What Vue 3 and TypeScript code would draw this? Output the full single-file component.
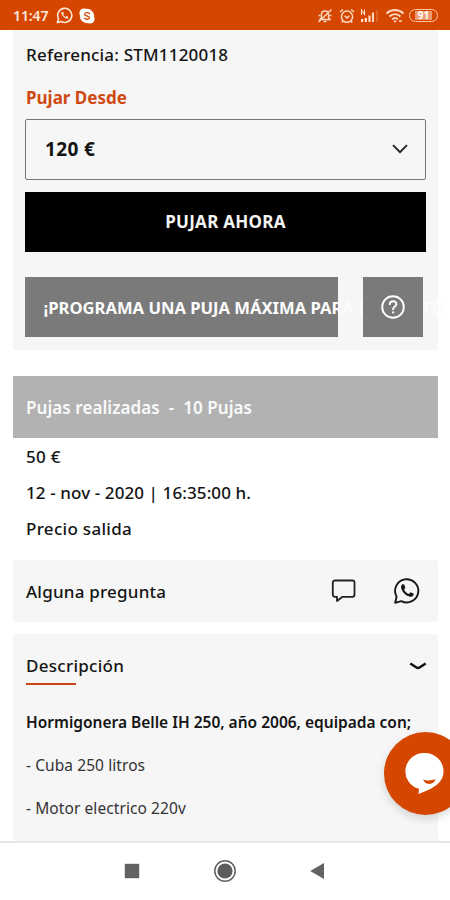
<script setup lang="ts">
interface Bid {
  amount: string
  date: string
  note: string
}

const reference = 'STM1120018'
const selectedBid = '120 €'
const bidCount = 10
const bid: Bid = { amount: '50 €', date: '12 - nov - 2020 | 16:35:00 h.', note: 'Precio salida' }
const features: string[] = ['- Cuba 250 litros', '- Motor electrico 220v']
</script>

<template>
  <div class="screen">
    <header class="status">
      <span class="clock">11:47</span>
      <svg class="s-wa" width="17" height="17" viewBox="0 0 24 24" fill="none" stroke="#ffe9dc" stroke-width="2.2">
        <path d="M2 22l1.6-5.4A10 10 0 1 1 7.4 20.500z" stroke-linejoin="round" />
        <path d="M8 7c-2 3 4.500 10 8.500 9.500l1-2.500-2.600-1.200-1.300 1.200c-1.500-.6-2.700-1.800-3.400-3.200l1-1.200L10 7z" fill="#ffe9dc" stroke="none" />
      </svg>
      <svg class="s-sk" width="16" height="16" viewBox="0 0 16 16">
        <circle cx="8" cy="8" r="7.200" fill="#fff" /><circle cx="5" cy="5" r="4.600" fill="#fff" /><circle cx="11" cy="11" r="4.600" fill="#fff" />
        <path d="M10.500 5.700C9.500 4.200 5.600 4.300 5.600 6.300c0 2.200 4.900 1.200 4.900 3.300 0 2.100-4.100 2.100-5.100.6" fill="none" stroke="#d64a08" stroke-width="1.300" stroke-linecap="round" />
      </svg>
      <div class="status-right">
        <svg width="16" height="16" viewBox="0 0 16 16" fill="none" stroke="#ffd9c2" stroke-width="1.400">
          <path d="M3 11.500l1.500-2V6.500C4.500 4.500 6 3 8 3s3.500 1.500 3.500 3.500v3l1.500 2zM6.500 13.500h3M1.500 14L14.500 1.500M1.500 7.500h2M12.500 7.500h2" />
        </svg>
        <svg width="16" height="16" viewBox="0 0 16 16" fill="none" stroke="#ffd9c2" stroke-width="1.500">
          <circle cx="8" cy="8.700" r="5.600" /><path d="M5.600 7.700L8 10l2.400-2.300M1 4l3-2.500M15 4l-3-2.500M4 13l-1.200 1.500M12 13l1.200 1.500" />
        </svg>
        <svg class="s-signal" width="18" height="16" viewBox="0 0 18 16" fill="#ffd9c2">
          <path d="M1 14h2.300v-3H1zM4.700 14H7v-4H4.700zM8.400 14h2.200V7.500H8.400zM12 14h2V4.500h-2z" />
          <path d="M16.500 2h1v12h-1z" opacity=".4" />
          <path d="M1.500 7V2l3 4.500V1.500" fill="none" stroke="#ffd9c2" stroke-width="1.100" />
        </svg>
        <svg class="s-wifi" width="20" height="16" viewBox="0 0 20 16" fill="none" stroke="#ffd9c2" stroke-width="2">
          <path d="M1.500 5.500c5-4.600 12-4.600 17 0M4.500 8.500c3.300-3 7.700-3 11 0M7.200 11.300c1.700-1.500 3.900-1.500 5.600 0" />
          <path d="M8.300 12.500L10 15l1.700-2.500z" fill="#ffd9c2" stroke="none" /><path d="M14 13h3" stroke-width="1.500" />
        </svg>
        <span class="battery"><span class="level">91</span></span>
      </div>
    </header>

    <main class="content">
      <section class="bid-panel">
        <p class="ref">Referencia: {{ reference }}</p>
        <p class="from">Pujar Desde</p>
        <div class="select">
          <span class="select-value">{{ selectedBid }}</span>
          <svg width="16" height="10" viewBox="0 0 16 10" fill="none" stroke="#222" stroke-width="1.900"><path d="M1 1.200l7 7 7-7" /></svg>
        </div>
        <button class="btn now"><span>PUJAR AHORA</span></button>
        <div class="program-row">
          <button class="btn program"><span>¡PROGRAMA UNA PUJA MÁXIMA PARA ESTE LOTE!</span></button>
          <button class="btn help">
            <svg width="24" height="24" viewBox="0 0 24 24" fill="none" stroke="#fff" stroke-width="1.900" stroke-linecap="round">
              <circle cx="12" cy="12" r="10.800" /><path d="M8.700 9.300c.3-4.200 6.800-3.900 6.700-.1 0 2.300-3.300 2.400-3.300 5" /><path d="M12.100 17.300v.2" stroke-width="2.200" />
            </svg>
          </button>
        </div>
      </section>

      <section class="bids">
        <h2 class="bids-head"><span>Pujas realizadas</span><span class="dash">-</span><span>{{ bidCount }} Pujas</span></h2>
        <div class="bid">
          <p class="amount">{{ bid.amount }}</p>
          <p class="date">{{ bid.date }}</p>
          <p class="note">{{ bid.note }}</p>
        </div>
      </section>

      <section class="question">
        <span class="question-label">Alguna pregunta</span>
        <svg class="chat" width="26" height="26" viewBox="0 0 26 26" fill="none" stroke="#222" stroke-width="1.800" stroke-linejoin="round">
          <path d="M3.500 2.500h18a2 2 0 0 1 2 2v12.300a2 2 0 0 1-2 2H11.500L6 23v-4.200H3.800a2 2 0 0 1-2-2V4.500a2 2 0 0 1 1.700-2z" />
        </svg>
        <svg class="wa" width="28" height="28" viewBox="0 0 28 28" fill="none" stroke="#181818" stroke-width="1.900" stroke-linejoin="round">
          <path d="M2.200 25.800l1.400-6.300a11.600 11.600 0 1 1 4.700 4.600z" />
          <path d="M9.700 7.300c-1.300.6-2 2-1.500 3.900 1.100 4.200 4.700 7.600 8.900 8.500 2 .4 3.500-.7 3.700-2.900l-3.200-1.500-1.700 1.700c-2.300-.9-3.900-2.500-4.800-4.600l1.300-1.600-1.300-3.500z" fill="#181818" stroke="none" />
        </svg>
      </section>

      <section class="description">
        <div class="desc-head">
          <h2 class="desc-title">Descripción</h2>
          <svg width="18" height="9" viewBox="0 0 18 9" fill="none" stroke="#111" stroke-width="2.600"><path d="M1.300 1.500L7.500 5.500q1.500 1 3 0L16.700 1.500" /></svg>
        </div>
        <p class="lead">Hormigonera Belle IH 250, año 2006, equipada con;</p>
        <p v-for="feature in features" :key="feature" class="feature">{{ feature }}</p>
      </section>
    </main>

    <button class="fab">
      <svg width="41" height="45" viewBox="0 0 42 46">
        <path d="M21 2a19 18.700 0 0 1 19.500 18.700C40.500 33 29 39 14.800 44l.6-5.300A19.200 18.700 0 0 1 21 2z" fill="#fff" />
        <path d="M19.500 29.300c4.500 1.200 8.500 1 12.800-.3-1.700 6.200-10.300 6.200-12.800.3z" fill="#d54700" />
      </svg>
    </button>

    <nav class="navbar">
      <svg width="16" height="16" viewBox="0 0 16 16"><path d="M.8.800h14.400v14.400H.8z" fill="#626262" /></svg>
      <svg width="24" height="24" viewBox="0 0 24 24"><circle cx="12" cy="12" r="10.200" fill="none" stroke="#626262" stroke-width="1.500" /><circle cx="12" cy="12" r="7.600" fill="#5c5c5c" /></svg>
      <svg width="16" height="18" viewBox="0 0 16 18"><path d="M.2 9L14 1v16z" fill="#626262" /></svg>
    </nav>
  </div>
</template>

<style>
body {
  background: #fff;
}
</style>

<style scoped>
.screen {
  position: relative;
  display: flex;
  flex-direction: column;
  width: 450px;
  height: 900px;
  overflow: hidden;
  background: #fff;
  color: #141414;
  font-family: 'Noto Sans', 'Open Sans', sans-serif;
  font-size: 17px;
  font-weight: 500;
}
p, h2 {
  margin: 0;
  white-space: nowrap;
}
svg {
  display: block;
  flex: none;
}
.status {
  display: flex;
  flex: none;
  align-items: center;
  height: 30px;
  padding: 1px 12px 0 13px;
  box-sizing: border-box;
  background: #d54700;
  color: #ffe9dc;
}
.clock {
  width: 43px;
  font-size: 14px;
  font-weight: 600;
  letter-spacing: -0.1px;
}
.s-sk {
  margin-left: 6px;
}
.status-right {
  display: flex;
  align-items: center;
  margin-left: auto;
}
.status-right svg + svg {
  margin-left: 6px;
}
.status-right .s-signal {
  margin-left: 5px;
}
.status-right .s-wifi {
  margin-left: 7px;
}
.battery {
  display: flex;
  align-items: center;
  justify-content: center;
  width: 29px;
  height: 13px;
  margin-left: 4px;
  box-sizing: border-box;
  border: 1.5px solid #ffc5a5;
  border-radius: 7px;
}
.level {
  padding: 0 3px;
  background: #ed9a70;
  color: #fff;
  font-size: 10px;
  font-weight: 700;
  line-height: 9px;
}
.content {
  display: flex;
  flex-direction: column;
  height: 811px;
  padding: 0 12px 0 13px;
}
.bid-panel {
  height: 320px;
  padding: 12px 12px 0;
  box-sizing: border-box;
  background: #f6f6f6;
}
.ref {
  padding-left: 1px;
  line-height: 26px;
  letter-spacing: 0.2px;
}
.from {
  margin-top: 17px;
  padding-left: 1px;
  color: #cf4a12;
  font-weight: 700;
  line-height: 26px;
}
.select {
  display: flex;
  align-items: center;
  justify-content: space-between;
  height: 61px;
  margin-top: 8px;
  padding: 0 17px 2px 19px;
  box-sizing: border-box;
  border: 1.5px solid #777;
  border-radius: 2px;
}
.select-value {
  font-size: 19px;
  font-weight: 700;
  letter-spacing: 0.35px;
}
.btn {
  display: flex;
  align-items: center;
  justify-content: center;
  height: 60px;
  padding: 0;
  border: 0;
  color: #f4f4f4;
  font-family: inherit;
  font-size: 17px;
  font-weight: 700;
  white-space: nowrap;
}
.now {
  width: 100%;
  margin-top: 12px;
  padding-bottom: 2px;
  background: #000;
  letter-spacing: 0.27px;
}
.program-row {
  display: flex;
  gap: 25px;
  margin-top: 25px;
}
.program {
  justify-content: flex-start;
  flex: none;
  width: 313px;
  padding-left: 18.5px;
  background: #7a7a7a;
  color: #fcfcfc;
  font-size: 16.6px;
}
.help {
  position: relative;
  flex: none;
  width: 60px;
  background: #7a7a7a;
}
.bids-head {
  display: flex;
  align-items: center;
  height: 62px;
  margin-top: 26px;
  padding-left: 13px;
  background: #b2b2b2;
  color: #fafafa;
  font-size: 17px;
  font-weight: 600;
  letter-spacing: 0.07px;
}
.dash {
  margin: 0 9px;
}
.bid {
  height: 121px;
  padding: 1px 0 0 13px;
  line-height: 36px;
}
.amount {
  letter-spacing: 0.3px;
}
.date {
  letter-spacing: 0.1px;
}
.note {
  letter-spacing: 0.3px;
}
.question {
  display: flex;
  align-items: center;
  height: 62px;
  padding: 0 17px 0 13px;
  box-sizing: border-box;
  border-radius: 3px;
  background: #f6f6f6;
}
.question-label {
  margin-right: auto;
  letter-spacing: 0.22px;
}
.wa {
  margin-left: 36px;
}
.description {
  flex: 1;
  margin-top: 12px;
  padding: 18px 11px 0 13px;
  border-radius: 3px 3px 0 0;
  background: #f6f6f6;
}
.desc-head {
  display: flex;
  align-items: flex-start;
  justify-content: space-between;
  height: 57px;
}
.desc-head svg {
  margin-top: 10px;
}
.desc-title {
  font-size: 17px;
  font-weight: 500;
  line-height: 28px;
  letter-spacing: 0.28px;
}
.desc-title::after {
  display: block;
  width: 50px;
  height: 2px;
  margin-top: 3px;
  background: #c94618;
  content: '';
}
.lead {
  font-size: 15.5px;
  font-weight: 600;
  line-height: 26px;
}
.feature {
  margin-top: 17px;
  font-size: 15.5px;
  font-weight: 400;
  color: #333;
  line-height: 26px;
  letter-spacing: 0.08px;
}
.fab {
  position: absolute;
  top: 732px;
  left: 384px;
  display: flex;
  align-items: center;
  justify-content: center;
  width: 83px;
  height: 83px;
  padding: 0 2px 0 0;
  border: 0;
  border-radius: 50%;
  background: #d54700;
  box-shadow: 0 4px 9px rgba(0, 0, 0, 0.14);
}
.navbar {
  display: flex;
  align-items: center;
  justify-content: center;
  gap: 81px;
  height: 59px;
  padding-bottom: 2px;
  box-sizing: border-box;
  border-top: 2px solid #e6e6e6;
  background: #fff;
}
.navbar svg:nth-child(2) {
  margin: 0 -8px;
}
</style>
